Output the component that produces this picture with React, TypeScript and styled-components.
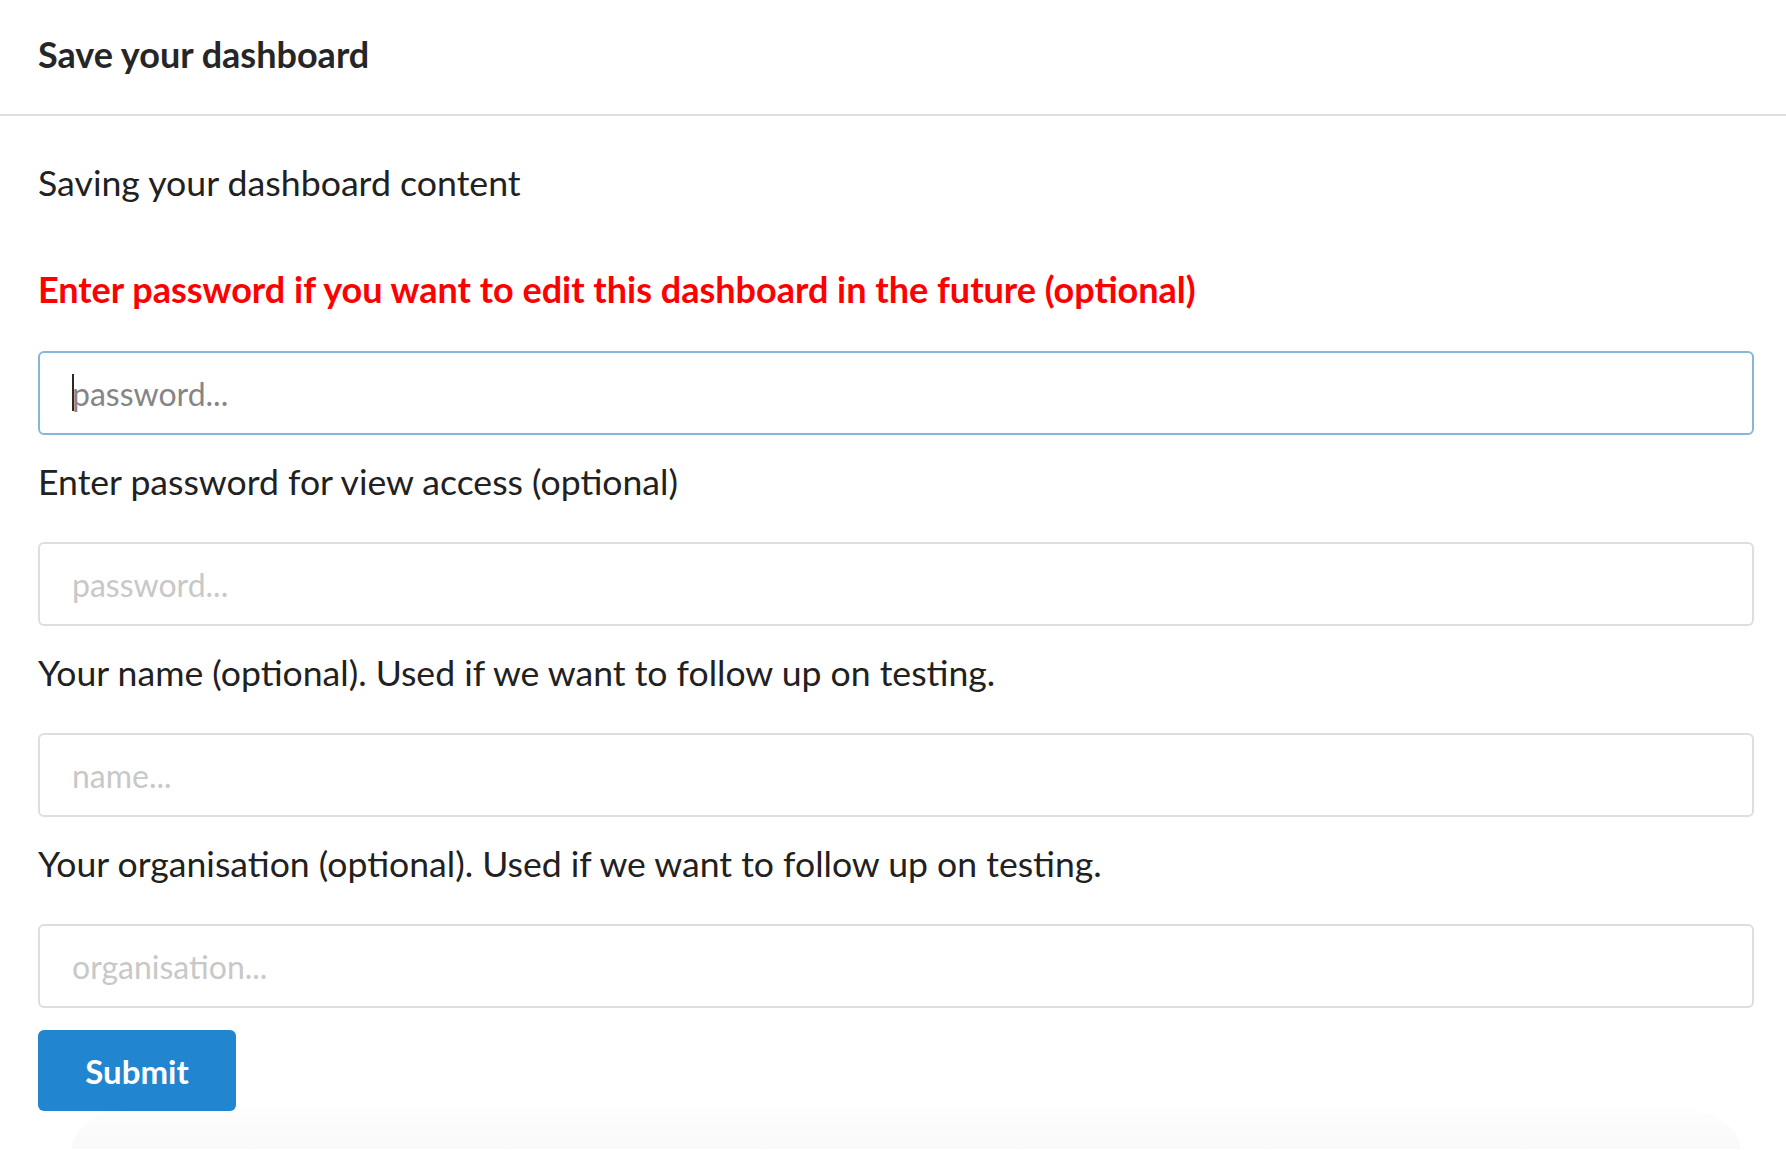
import React from "react";
import styled, { createGlobalStyle } from "styled-components";

const GlobalStyle = createGlobalStyle`
  html, body {
    margin: 0;
    padding: 0;
    background: #ffffff;
  }
  body {
    font-family: Lato, "Open Sans", "Liberation Sans", sans-serif;
    color: #212121;
  }
  * { box-sizing: border-box; }
`;

const Page = styled.div`
  width: 1786px;
  min-height: 1150px;
  display: flex;
  flex-direction: column;
  overflow: hidden;
`;

const Header = styled.header`
  padding: 32px 32px 38px 38px;
  border-bottom: 2px solid #e0e0e0;
`;

const Title = styled.h1`
  margin: 0;
  font-size: 36px;
  line-height: 44px;
  font-weight: 700;
  color: #262626;
`;

const Content = styled.main`
  display: flex;
  flex-direction: column;
  align-items: stretch;
  padding: 43px 32px 0 38px;
`;

const Intro = styled.p`
  margin: 0;
  font-size: 35.7px;
  line-height: 48px;
  color: #212121;
`;

const Warning = styled.h4`
  margin: 58px 0 38px;
  font-size: 36px;
  line-height: 48px;
  font-weight: 700;
  color: #ff0000;
`;

const Label = styled.label`
  display: block;
  margin: 23px 0 36px;
  font-size: 35.6px;
  line-height: 48px;
  color: #212121;
`;

const InputWrap = styled.div`
  position: relative;
  display: flex;
`;

const Input = styled.input<{ $focused?: boolean }>`
  flex: 1;
  height: 84px;
  padding: 0 32px;
  border: 2px solid ${(p) => (p.$focused ? "#85b7d9" : "#dedede")};
  border-radius: 6px;
  background: #ffffff;
  font-family: Lato, "Open Sans", "Liberation Sans", sans-serif;
  font-size: 32px;
  color: #212121;
  outline: none;
  &::placeholder {
    color: ${(p) => (p.$focused ? "#858585" : "#c8c8c8")};
    opacity: 1;
  }
`;

const Caret = styled.span`
  position: absolute;
  left: 34px;
  top: 23px;
  width: 2px;
  height: 37px;
  background: #2a2a2a;
  pointer-events: none;
`;

const SubmitButton = styled.button`
  align-self: flex-start;
  margin-top: 22px;
  width: 198px;
  height: 81px;
  border: none;
  border-radius: 6px;
  background: #2185d0;
  color: #ffffff;
  font-family: Lato, "Open Sans", "Liberation Sans", sans-serif;
  font-size: 33px;
  font-weight: 700;
  cursor: pointer;
`;

const ShadowBand = styled.div`
  margin: -2px 46px 0 72px;
  height: 40px;
  border-radius: 60px 60px 0 0 / 40px 40px 0 0;
  background: linear-gradient(to bottom, rgba(0, 0, 0, 0.006), rgba(0, 0, 0, 0.022));
`;

type FieldDef = { label?: string; placeholder: string; focused?: boolean };

const fields: FieldDef[] = [
  { placeholder: "password...", focused: true },
  { label: "Enter password for view access (optional)", placeholder: "password..." },
  { label: "Your name (optional). Used if we want to follow up on testing.", placeholder: "name..." },
  {
    label: "Your organisation (optional). Used if we want to follow up on testing.",
    placeholder: "organisation...",
  },
];

export default function App() {
  return (
    <>
      <GlobalStyle />
      <Page>
        <Header>
          <Title>Save your dashboard</Title>
        </Header>
        <Content>
          <Intro>Saving your dashboard content</Intro>
          <Warning>Enter password if you want to edit this dashboard in the future (optional)</Warning>
          {fields.map((f, i) => (
            <React.Fragment key={i}>
              {f.label && <Label>{f.label}</Label>}
              <InputWrap>
                <Input
                  type={f.placeholder.startsWith("password") ? "password" : "text"}
                  placeholder={f.placeholder}
                  $focused={f.focused}
                />
                {f.focused && <Caret />}
              </InputWrap>
            </React.Fragment>
          ))}
          <SubmitButton type="button">Submit</SubmitButton>
        </Content>
        <ShadowBand />
      </Page>
    </>
  );
}
